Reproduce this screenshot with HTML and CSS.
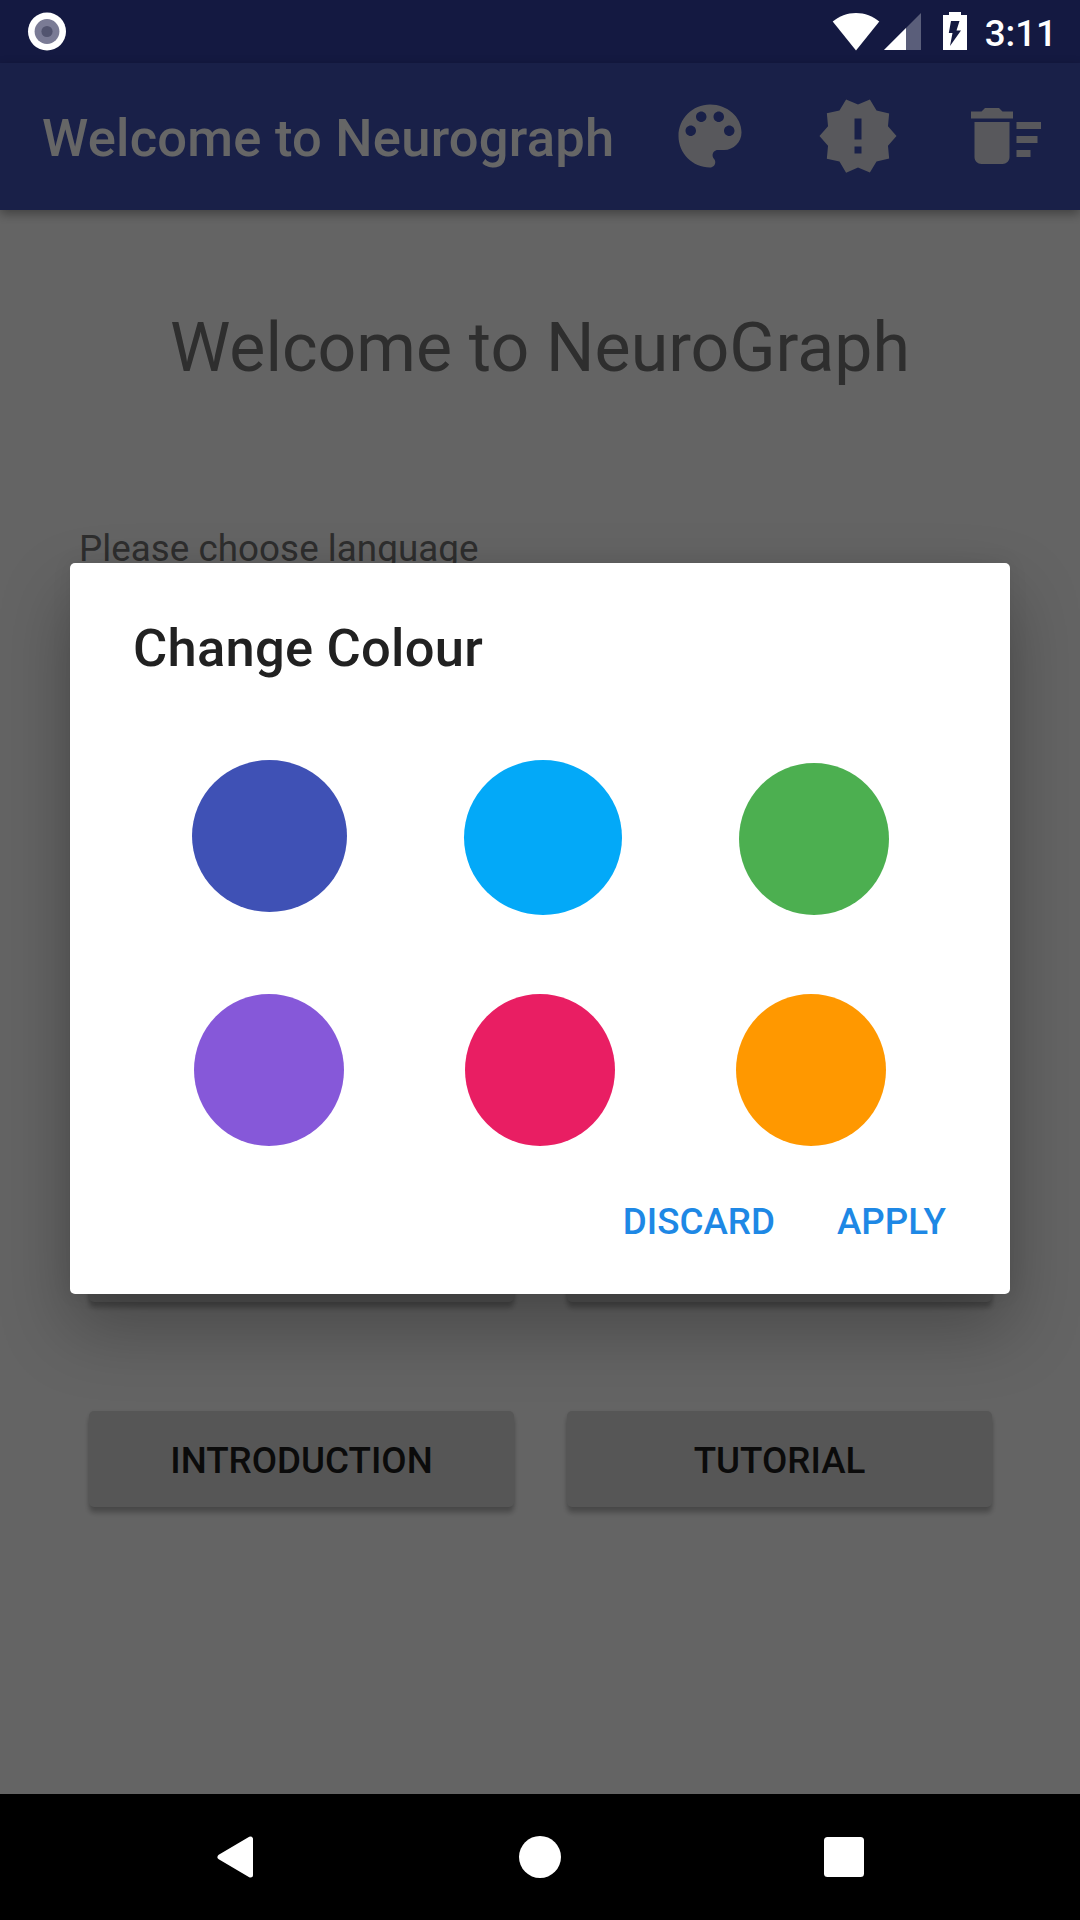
FILE: index.html
```html
<!DOCTYPE html>
<html lang="en">
<head>
<meta charset="utf-8">
<title>Neurograph</title>
<link rel="stylesheet" href="styles.css">
</head>
<body>
<div class="screen">
  <header class="status-bar">
    <svg class="status-dot" viewBox="0 0 40 40"><circle cx="20" cy="19.500" r="19" fill="#fff"/><circle cx="20" cy="19.500" r="12.4" fill="#7a7b95"/><circle cx="20" cy="19.500" r="5.6" fill="#52546f"/></svg>
    <div class="status-right">
      <svg class="wifi" viewBox="0 0 48 38"><path d="M.7 8.5C7 3.3 15.2 0 24 0s17 3.3 23.3 8.5L24 37.5z" fill="#fff"/></svg>
      <svg class="signal" viewBox="0 0 37 37"><path d="M37 0V37H0z" fill="#fff" fill-opacity=".3"/><path d="M22 15V37H0z" fill="#fff"/></svg>
      <svg class="battery" viewBox="0 0 24 38"><path d="M6 0H18V3H24V38H0V3H6z" fill="#fff"/><path d="M8 9h8.500l-3 9.500H18L7 34l2.500-13H5.800z" fill="#141941"/></svg>
      <span class="clock">3:11</span>
    </div>
  </header>
  <main class="content">
    <div class="app-bar">
      <h1 class="app-title">Welcome to Neurograph</h1>
      <div class="actions">
        <svg class="action" viewBox="0 0 24 24"><path d="M12 3c-4.970 0-9 4.030-9 9s4.030 9 9 9c.83 0 1.500-.67 1.500-1.500 0-.39-.15-.74-.39-1.010-.23-.26-.38-.61-.38-.99 0-.83.67-1.500 1.500-1.500H16c2.760 0 5-2.240 5-5 0-4.420-4.030-8-9-8zm-5.500 9c-.83 0-1.500-.67-1.500-1.500S5.670 9 6.500 9 8 9.670 8 10.500 7.330 12 6.500 12zm3-4C8.670 8 8 7.330 8 6.500S8.670 5 9.500 5s1.500.67 1.500 1.500S10.330 8 9.500 8zm5 0c-.83 0-1.500-.67-1.500-1.500S13.670 5 14.500 5s1.500.67 1.500 1.500S15.330 8 14.500 8zm3 4c-.83 0-1.500-.67-1.500-1.500S16.670 9 17.500 9s1.500.67 1.500 1.500-.67 1.500-1.500 1.500z"/></svg>
        <svg class="action" viewBox="0 0 24 24"><path d="M23 12l-2.440-2.780.34-3.680-3.610-.82-1.890-3.180L12 3 8.600 1.540 6.710 4.720l-3.610.81.34 3.680L1 12l2.440 2.780-.34 3.690 3.610.82 1.890 3.180L12 21l3.400 1.460 1.890-3.180 3.610-.82-.34-3.680L23 12zm-10 5h-2v-2h2v2zm0-4h-2V7h2v6z"/></svg>
        <svg class="action" viewBox="0 0 24 24"><path d="M15 16h4v2h-4zm0-8h7v2h-7zm0 4h6v2h-6zM3 18c0 1.100.9 2 2 2h6c1.100 0 2-.9 2-2V8H3v10zM14 5h-3l-1-1H6L5 5H2v2h12z"/></svg>
      </div>
    </div>
    <h2 class="headline">Welcome to NeuroGraph</h2>
    <p class="prompt">Please choose language</p>
    <div class="button-grid">
      <div class="button"></div>
      <div class="button"></div>
      <div class="button">INTRODUCTION</div>
      <div class="button">TUTORIAL</div>
    </div>
    <div class="scrim">
      <section class="dialog">
        <h3 class="dialog-title">Change Colour</h3>
        <div class="swatches">
          <span class="swatch indigo"></span>
          <span class="swatch blue"></span>
          <span class="swatch green"></span>
          <span class="swatch purple"></span>
          <span class="swatch pink"></span>
          <span class="swatch orange"></span>
        </div>
        <div class="dialog-actions"><span>DISCARD</span><span>APPLY</span></div>
      </section>
    </div>
  </main>
  <nav class="nav-bar">
    <svg class="nav-icon" viewBox="0 0 44 44"><path d="M36.500 4v36L6 22z" fill="#fff" stroke="#fff" stroke-width="5" stroke-linejoin="round"/></svg>
    <svg class="nav-icon" viewBox="0 0 44 44"><circle cx="22" cy="22" r="21" fill="#fff"/></svg>
    <svg class="nav-icon" viewBox="0 0 44 44"><rect x="2" y="2" width="40" height="40" rx="3.500" fill="#fff"/></svg>
  </nav>
</div>
</body>
</html>
```
FILE: styles.css
```css
* { box-sizing: border-box; margin: 0; padding: 0; }
body { background: #000; font-family: Roboto, sans-serif; }
svg { display: block; flex: none; }

.screen { width: 1080px; height: 1920px; display: flex; flex-direction: column; overflow: hidden; }

.status-bar {
  height: 63px; flex: none; background: #141941;
  display: flex; justify-content: space-between; align-items: flex-start;
  padding: 12px 23px 0 27px;
}
.status-dot { width: 40px; height: 40px; }
.status-right { display: flex; align-items: flex-start; }
.wifi { width: 48px; height: 38px; margin: 1px 4px 0 0; }
.signal { width: 37px; height: 37px; margin: 1px 22px 0 0; }
.battery { width: 24px; height: 38px; margin-right: 18px; }
.clock { color: #fff; font-size: 36.75px; line-height: 44px; font-weight: 500; }

.content { position: relative; height: 1731px; flex: none; background: #fafafa; }

.app-bar {
  height: 147px; background: #3f51b5; padding: 0 32px 0 42px;
  display: flex; align-items: center; justify-content: space-between;
  box-shadow: 0 4px 10px rgba(0, 0, 0, .35);
}
.app-title {
  color: #fff; font-size: 52.5px; line-height: 62px; font-weight: 500;
  letter-spacing: .24px; padding-top: 2px; white-space: nowrap;
}
.actions { display: flex; gap: 64px; padding-bottom: 1px; }
.action { width: 84px; height: 84px; fill: #dedfe8; fill-opacity: .98; }

.headline {
  margin-top: 98px; text-align: center; color: #737373;
  font-size: 68px; line-height: 80px; font-weight: 400;
}
.prompt { margin: 139px 0 0 79px; color: #737373; font-size: 36.75px; line-height: 43px; letter-spacing: .05px; }

.button-grid {
  display: grid; grid-template-columns: 425px 425px; gap: 109px 53px;
  margin: 636px 0 0 89px;
}
.button {
  height: 96px; border-radius: 5px; background: #d6d7d7; color: #1c1c1c;
  box-shadow: 0 6px 5px rgba(0, 0, 0, .24), 0 1px 4px rgba(0, 0, 0, .1);
  font-size: 36.75px; font-weight: 500; line-height: 99px; text-align: center;
}

.scrim { position: absolute; inset: 0; padding: 500px 70px 0; background: rgba(0, 0, 0, .6); }
.dialog {
  height: 731px; border-radius: 5px; background: #fff; padding: 54px 64px 0 63px;
  box-shadow: 0 34px 70px rgba(0, 0, 0, .28), 0 0 20px rgba(0, 0, 0, .07);
}
.dialog-title { color: #212121; font-size: 52.5px; line-height: 62px; font-weight: 500; letter-spacing: .24px; }

.swatches {
  display: grid; grid-template-columns: 272px 271px 271px; grid-template-rows: 155px 152px;
  row-gap: 79px; margin: 81px 0 0 59px;
}
.swatch { width: 150px; height: 152px; border-radius: 50%; }
.indigo { background: #3f51b5; width: 155px; }
.blue { background: #03a9f8; width: 158px; height: 155px; }
.green { background: #4caf50; margin: 3px 0 0 4px; }
.purple { background: #8658d9; margin-left: 2px; }
.pink { background: #e91e63; margin-left: 1px; }
.orange { background: #ff9800; margin-left: 1px; }

.dialog-actions {
  display: flex; justify-content: flex-end; gap: 62px; margin-top: 54px;
  color: #1e88e5; font-size: 36.75px; line-height: 43px; font-weight: 500;
}

.nav-bar {
  height: 126px; flex: none; background: #000; padding: 0 214px;
  display: flex; align-items: center; justify-content: space-between;
}
.nav-icon { width: 44px; height: 44px; }
```
